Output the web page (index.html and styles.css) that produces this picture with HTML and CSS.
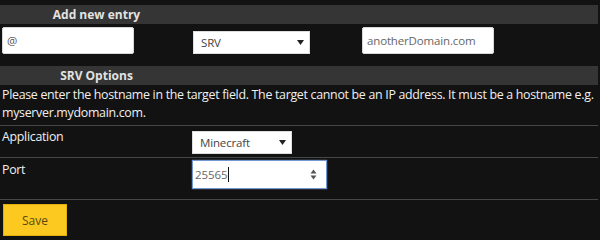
FILE: index.html
```html
<!DOCTYPE html>
<html>
<head>
<meta charset="utf-8">
<link rel="stylesheet" href="styles.css">
</head>
<body>
<div class="page">
  <div class="bar"><span class="bar-title">Add new entry</span></div>
  <div class="entry-row">
    <div class="cell"><input class="field field-name" type="text" value="@"></div>
    <div class="cell">
      <div class="select select-type">
        <select><option>SRV</option></select>
        <svg class="arrow" width="7" height="5" viewBox="0 0 7 5"><path d="M0 0H7L3.5 5Z" fill="#222"/></svg>
      </div>
    </div>
    <div class="cell"><input class="field field-domain" type="text" placeholder="anotherDomain.com"></div>
  </div>
  <div class="bar bar-second"><span class="bar-title">SRV Options</span></div>
  <p class="note">Please enter the hostname in the target field. The target cannot be an IP address. It must be a hostname e.g. myserver.mydomain.com.</p>
  <div class="opt-row opt-app">
    <label class="opt-label">Application</label>
    <div class="select select-app">
      <select><option>Minecraft</option></select>
      <svg class="arrow" width="7" height="5" viewBox="0 0 7 5"><path d="M0 0H7L3.5 5Z" fill="#222"/></svg>
    </div>
  </div>
  <div class="opt-row opt-port">
    <label class="opt-label">Port</label>
    <div class="number">
      <span class="num-value">25565</span><span class="caret"></span>
      <svg class="spin" width="7" height="11" viewBox="0 0 7 11"><path d="M0.5 4.5H6.5L3.5 0.5Z M0.5 6.5H6.5L3.5 10.5Z" fill="#555"/></svg>
    </div>
  </div>
  <div class="actions">
    <button class="save" type="button">Save</button>
  </div>
</div>
</body>
</html>
```
FILE: styles.css
```css
html, body {
  margin: 0;
  padding: 0;
  background: #121212;
}
body {
  font-family: "Open Sans", "Noto Sans", sans-serif;
  color: #ececec;
  font-size: 12.4px;
  letter-spacing: -0.3px;
}
.page {
  padding-top: 5px;
  width: 598px;
}
.bar {
  height: 19px;
  background: #353535;
  display: flex;
  align-items: center;
}
.bar-title {
  width: 193px;
  text-align: center;
  font-weight: 700;
  font-size: 12px;
  letter-spacing: 0;
  color: #e2e2e2;
}
.entry-row {
  display: grid;
  grid-template-columns: 193px 169px 1fr;
  align-items: center;
  height: 27px;
  margin-top: 3px;
}
.cell {
  display: flex;
}
.field {
  box-sizing: border-box;
  height: 27px;
  width: 132px;
  border: 1px solid #d8d8d8;
  border-radius: 2px;
  background: #fff;
  font-family: "Open Sans", sans-serif;
  font-size: 11.5px;
  letter-spacing: -0.15px;
  color: #555;
  padding: 0 4px;
  outline: none;
}
.field::placeholder {
  color: #666;
}
.field-name {
  margin-left: 2px;
}
.select {
  box-sizing: border-box;
  display: flex;
  align-items: center;
  background: #fff;
  border: 1px solid #ddd;
  height: 23px;
}
.select select {
  appearance: none;
  -webkit-appearance: none;
  border: none;
  background: transparent;
  flex: 1;
  font-family: "Open Sans", sans-serif;
  font-size: 11.5px;
  letter-spacing: -0.15px;
  color: #444;
  padding: 0 0 0 7px;
  outline: none;
  height: 21px;
}
.select .arrow {
  margin-right: 5px;
  flex: none;
}
.select-type {
  width: 117px;
  margin-top: 3px;
}
.select-app {
  width: 100px;
  margin-top: 5px;
}
.bar-second {
  margin-top: 12px;
}
.note {
  margin: 0;
  padding: 1px 2px 3px 2px;
  line-height: 18px;
  color: #f0f0f0;
  width: 594px;
}
.opt-row {
  display: grid;
  grid-template-columns: 192px 1fr;
  border-top: 1px solid #464646;
}
.opt-app {
  height: 31px;
}
.opt-port {
  height: 41px;
}
.opt-label {
  padding: 2px 0 0 2px;
  line-height: 18px;
  color: #f0f0f0;
}
.opt-port .opt-label {
  padding-top: 3px;
}
.number {
  box-sizing: border-box;
  width: 135px;
  height: 29px;
  margin-top: 2px;
  background: #fff;
  border: 1px solid #7397d2;
  box-shadow: 0 0 1px #9db6e0;
  display: flex;
  align-items: center;
  padding-left: 2px;
}
.num-value {
  font-size: 11.5px;
  letter-spacing: -0.1px;
  color: #666;
}
.caret {
  width: 1px;
  height: 15px;
  background: #111;
  margin-left: 1px;
}
.spin {
  margin-left: auto;
  margin-right: 9px;
}
.actions {
  border-top: 1px solid #464646;
  padding: 4px 0 0 3px;
}
.save {
  width: 64px;
  height: 32px;
  background: #fbc920;
  border: 1px solid #e1b00e;
  font-family: "Open Sans", sans-serif;
  font-size: 12px;
  color: #5a4a10;
  padding: 0;
}
```
